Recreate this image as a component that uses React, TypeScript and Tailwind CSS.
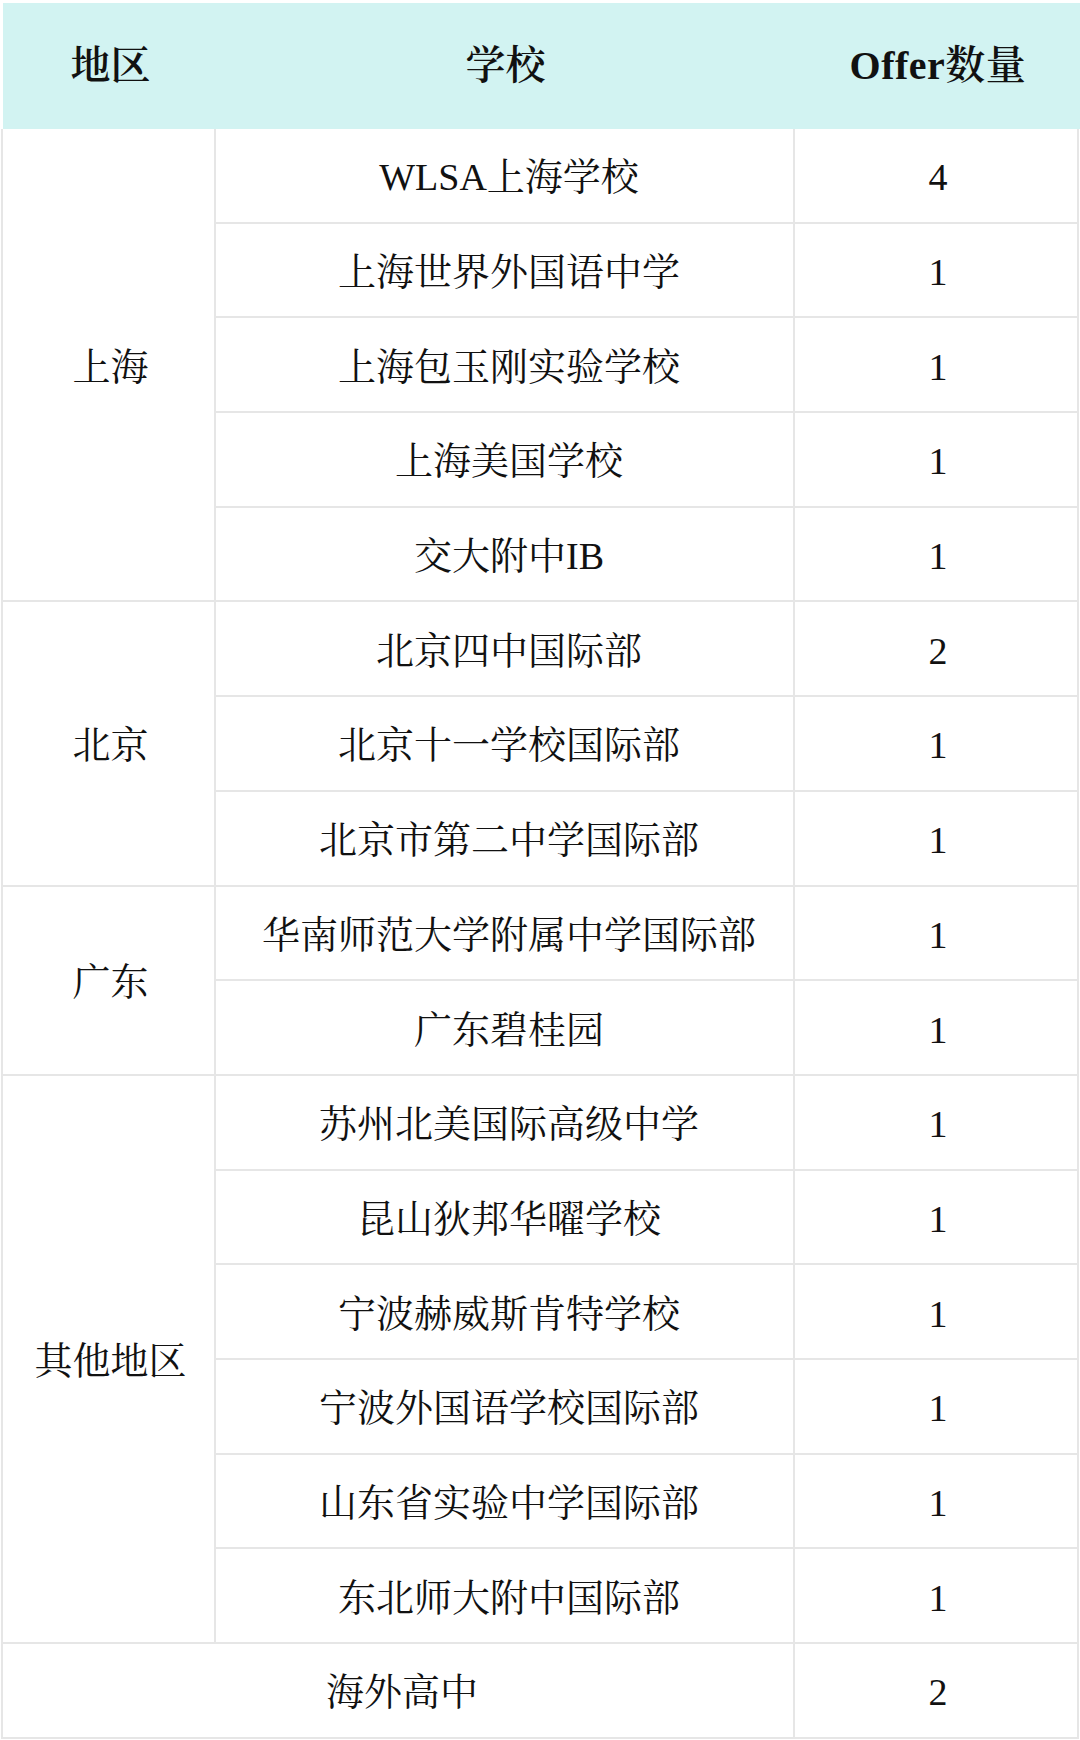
import React from "react";

const FONT = {
  fontFamily:
    '"Liberation Serif", "Noto Serif CJK SC", "Noto Sans CJK SC", serif',
};

type Group = { region: string; schools: [string, string][] };

const groups: Group[] = [
  {
    region: "上海",
    schools: [
      ["WLSA上海学校", "4"],
      ["上海世界外国语中学", "1"],
      ["上海包玉刚实验学校", "1"],
      ["上海美国学校", "1"],
      ["交大附中IB", "1"],
    ],
  },
  {
    region: "北京",
    schools: [
      ["北京四中国际部", "2"],
      ["北京十一学校国际部", "1"],
      ["北京市第二中学国际部", "1"],
    ],
  },
  {
    region: "广东",
    schools: [
      ["华南师范大学附属中学国际部", "1"],
      ["广东碧桂园", "1"],
    ],
  },
  {
    region: "其他地区",
    schools: [
      ["苏州北美国际高级中学", "1"],
      ["昆山狄邦华曜学校", "1"],
      ["宁波赫威斯肯特学校", "1"],
      ["宁波外国语学校国际部", "1"],
      ["山东省实验中学国际部", "1"],
      ["东北师大附中国际部", "1"],
    ],
  },
];

const spanClass: Record<number, string> = {
  2: "row-span-2",
  3: "row-span-3",
  5: "row-span-5",
  6: "row-span-6",
};

const cell =
  "bg-white flex items-center justify-center text-[38px] text-[#111111] leading-none pt-[4px]";

export default function App() {
  return (
    <div className="w-[1080px] h-[1740px] bg-white overflow-hidden" style={FONT}>
      <div className="pt-[3px] pl-[3px]">
        <div className="h-[126px] bg-[#d2f3f2] grid grid-cols-[211px_579px_284px] text-[40px] font-semibold text-[#111111] leading-none">
          <div className="flex items-center justify-center pl-[4px]">地区</div>
          <div className="flex items-center justify-center pl-[4px]">学校</div>
          <div className="flex items-center justify-center pl-[6px] tracking-[0.5px]">
            Offer数量
          </div>
        </div>
      </div>
      <div className="ml-[1px] w-[1078px] bg-[#e6e6e6] grid grid-cols-[211px_577px_282px] auto-rows-[92.7px] gap-[2px] px-[2px] pb-[2px]">
        {groups.map((g) => (
          <React.Fragment key={g.region}>
            <div
              className={`${cell} ${spanClass[g.schools.length]} col-start-1 pl-[4px]`}
            >
              {g.region}
            </div>
            {g.schools.map(([s, n]) => (
              <React.Fragment key={s}>
                <div className={`${cell} col-start-2 pl-[9px]`}>{s}</div>
                <div className={`${cell} col-start-3 pl-[4px]`}>{n}</div>
              </React.Fragment>
            ))}
          </React.Fragment>
        ))}
        <div className={`${cell} col-span-2 col-start-1 pl-[8px]`}>海外高中</div>
        <div className={`${cell} col-start-3 pl-[4px]`}>2</div>
      </div>
    </div>
  );
}
